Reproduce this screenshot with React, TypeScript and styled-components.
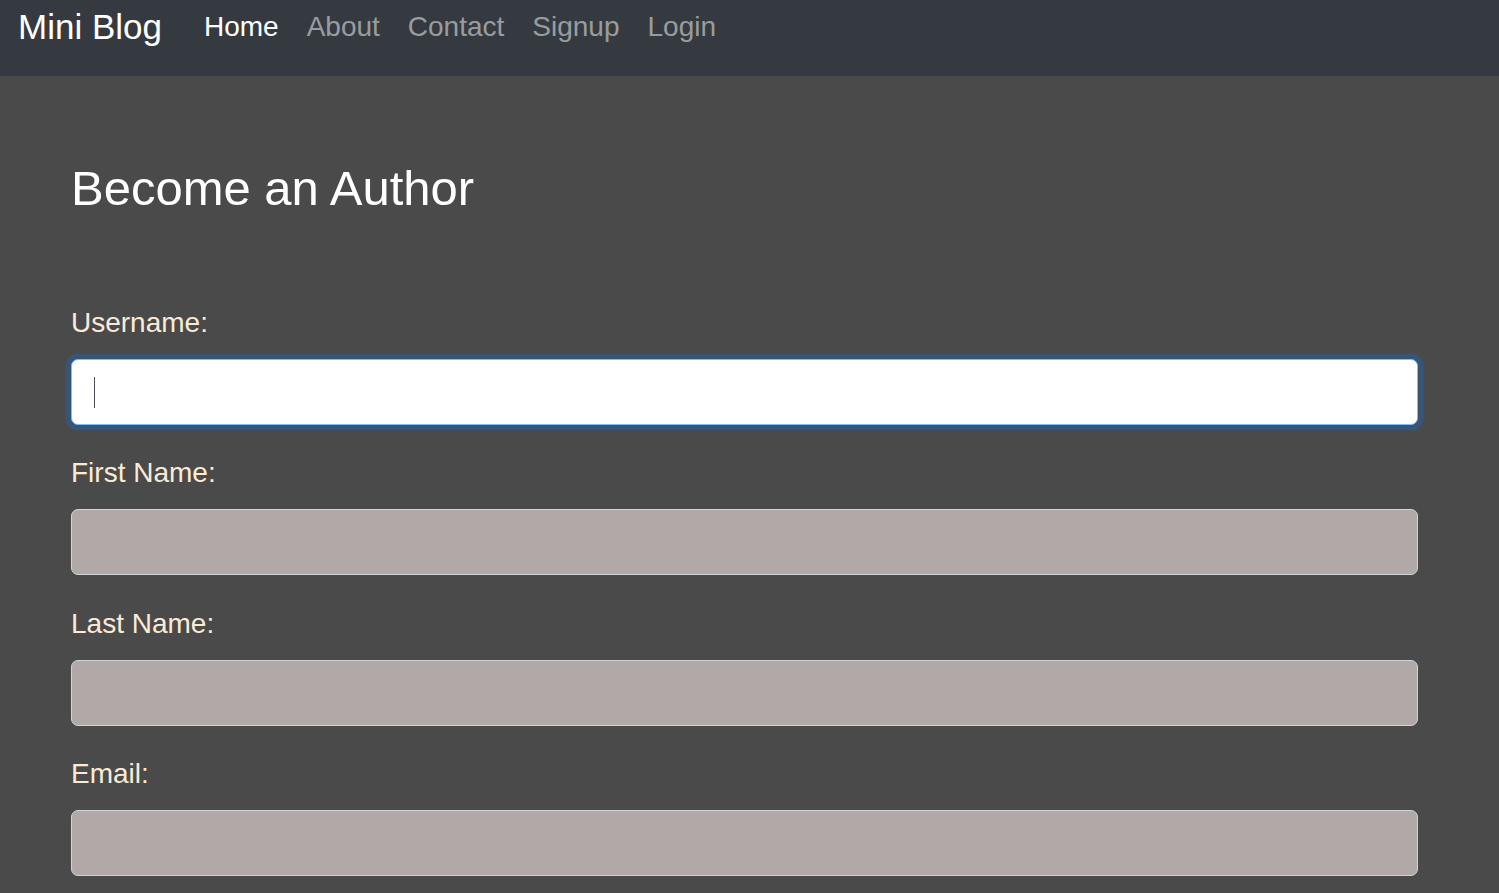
import React from "react";
import styled, { createGlobalStyle, css } from "styled-components";

const GlobalStyle = createGlobalStyle`
  html, body {
    margin: 0;
    padding: 0;
    background: #4a4a4a;
    font-family: "Liberation Sans", Arial, sans-serif;
  }
  * { box-sizing: border-box; }
`;

const Navbar = styled.nav`
  height: 76px;
  background: #343a40;
  display: flex;
  align-items: flex-start;
  padding-left: 18px;
`;

const Brand = styled.a`
  font-size: 35px;
  line-height: 42px;
  padding-top: 6px;
  color: #ffffff;
  text-decoration: none;
  margin-right: 28px;
  white-space: nowrap;
`;

const NavList = styled.ul`
  display: flex;
  list-style: none;
  margin: 0;
  padding: 0;
`;

const NavLink = styled.a<{ $active?: boolean }>`
  display: block;
  font-size: 28px;
  line-height: 42px;
  padding: 6px 14px 0;
  color: ${(p) => (p.$active ? "#ffffff" : "rgba(255,255,255,0.5)")};
  text-decoration: none;
`;

const Main = styled.main`
  padding: 83px 81px 0 71px;
`;

const Title = styled.h1`
  margin: 0 0 83.8px;
  font-size: 49px;
  font-weight: 400;
  line-height: 58.8px;
  color: #ffffff;
`;

const Group = styled.div`
  margin-bottom: 27.6px;
`;

const Label = styled.label`
  display: block;
  font-size: 28px;
  line-height: 42px;
  margin-bottom: 15px;
  color: #faebd7;
`;

const Field = styled.div`
  position: relative;
`;

const Input = styled.input<{ $focused?: boolean }>`
  display: block;
  width: 100%;
  height: 66px;
  padding: 10px 21px;
  font-size: 28px;
  font-family: inherit;
  border-radius: 7px;
  outline: none;
  color: #495057;
  ${(p) =>
    p.$focused
      ? css`
          background: #ffffff;
          border: 1px solid #80bdff;
          box-shadow: 0 0 0 5.6px rgba(0, 123, 255, 0.25);
        `
      : css`
          background: #b1a9a7;
          border: 1px solid #ced4da;
        `}
`;

const Caret = styled.span`
  position: absolute;
  left: 23px;
  top: 18px;
  width: 1px;
  height: 31px;
  background: #495057;
  pointer-events: none;
`;

const fields = [
  { id: "username", label: "Username:", focused: true },
  { id: "first", label: "First Name:" },
  { id: "last", label: "Last Name:" },
  { id: "email", label: "Email:" },
];

export default function App() {
  return (
    <>
      <GlobalStyle />
      <Navbar>
        <Brand href="#">Mini Blog</Brand>
        <NavList>
          <li><NavLink href="#" $active>Home</NavLink></li>
          <li><NavLink href="#">About</NavLink></li>
          <li><NavLink href="#">Contact</NavLink></li>
          <li><NavLink href="#">Signup</NavLink></li>
          <li><NavLink href="#">Login</NavLink></li>
        </NavList>
      </Navbar>
      <Main>
        <Title>Become an Author</Title>
        <form>
          {fields.map((f) => (
            <Group key={f.id}>
              <Label htmlFor={f.id}>{f.label}</Label>
              <Field>
                <Input id={f.id} type="text" $focused={f.focused} />
                {f.focused && <Caret />}
              </Field>
            </Group>
          ))}
        </form>
      </Main>
    </>
  );
}
